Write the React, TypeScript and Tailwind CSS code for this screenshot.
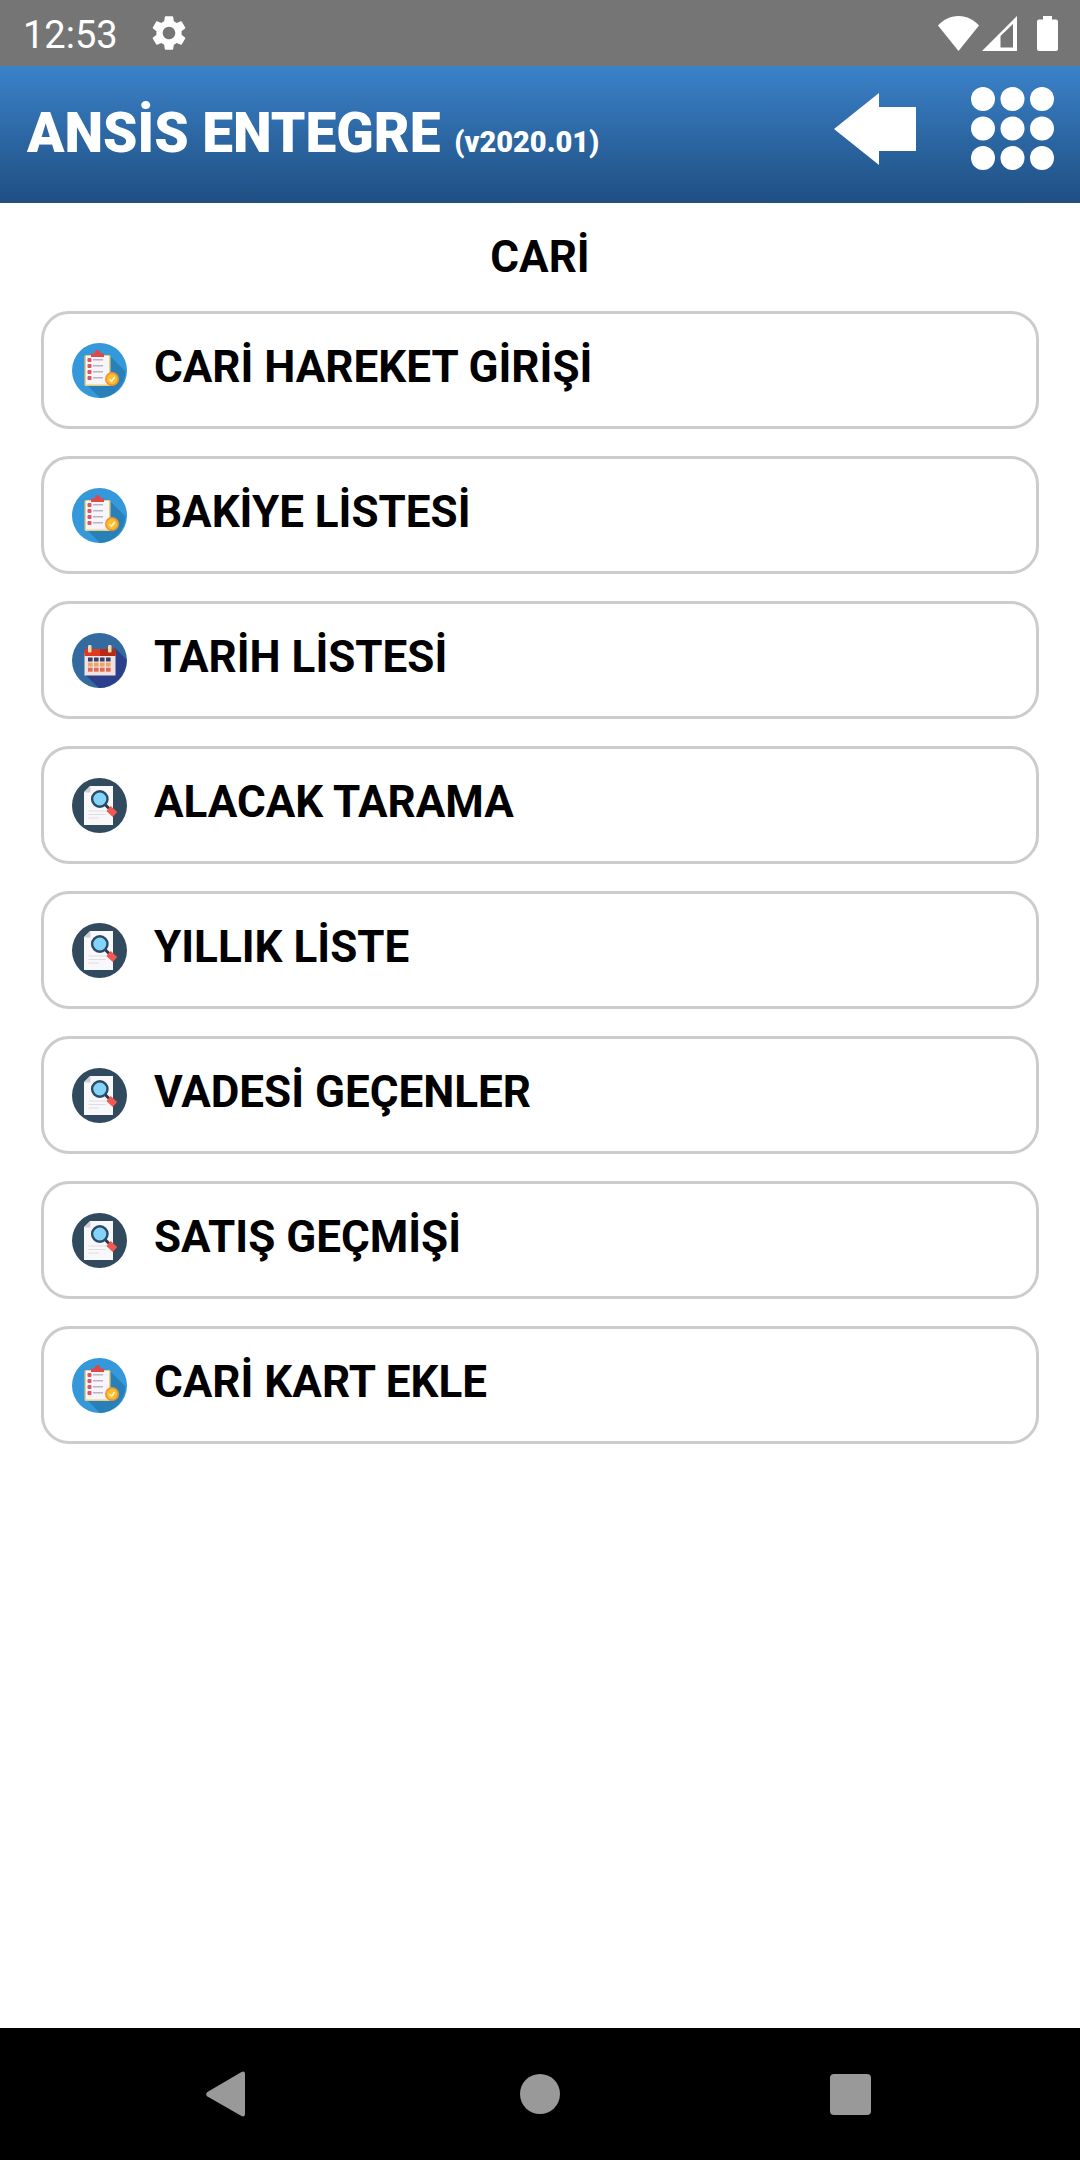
import { MdSettings } from 'react-icons/md'

type IconName = 'clipboard' | 'calendar' | 'search'

// Menu entries of the "Cari" module
const menuItems: { label: string; icon: IconName }[] = [
  { label: 'CARİ HAREKET GİRİŞİ', icon: 'clipboard' },
  { label: 'BAKİYE LİSTESİ', icon: 'clipboard' },
  { label: 'TARİH LİSTESİ', icon: 'calendar' },
  { label: 'ALACAK TARAMA', icon: 'search' },
  { label: 'YILLIK LİSTE', icon: 'search' },
  { label: 'VADESİ GEÇENLER', icon: 'search' },
  { label: 'SATIŞ GEÇMİŞİ', icon: 'search' },
  { label: 'CARİ KART EKLE', icon: 'clipboard' },
]

function ClipboardIcon() {
  return (
    <svg viewBox="0 0 55 55" className="size-[55px]" aria-hidden="true">
      <circle cx="27.5" cy="27.5" r="27.5" fill="#3498db" />
      <path d="M38 13 L53.5 28.5 A27.5 27.5 0 0 1 28 55 L15 42 Z" fill="#2980b9" />
      <rect x="12.5" y="12" width="26" height="31" rx="1.5" fill="#e8cf7c" />
      <rect x="14" y="13" width="23" height="28.5" fill="#f7f4fa" />
      <path d="M19 14 V10.5 H22.5 Q23 7 25.5 7 Q28 7 28.5 10.5 H32 V14 Z" fill="#e04848" />
      {[17, 23, 29, 35].map((y) => (
        <g key={y}>
          <rect x="15.5" y={y - 2} width="4" height="4" rx="1" fill="#dc5560" />
          <rect x="21" y={y - 1} width="10" height="1.5" fill="#b9b4c4" />
        </g>
      ))}
      <circle cx="40" cy="36" r="7" fill="#f2952e" />
      <circle cx="40" cy="36" r="5.2" fill="#fbc02f" />
      <path d="M37.5 36.3 L39.5 38.3 L42.8 34" fill="none" stroke="#fff3c4" strokeWidth="1.6" />
    </svg>
  )
}

function CalendarIcon() {
  return (
    <svg viewBox="0 0 55 55" className="size-[55px]" aria-hidden="true">
      <circle cx="27.5" cy="27.5" r="27.5" fill="#336a9f" />
      <path d="M43 15 L54.5 26.5 A27.5 27.5 0 0 1 27 55 L13 41.5 Z" fill="#2c3f8a" />
      <rect x="12.5" y="20" width="31" height="22.5" fill="#efe3e2" />
      <path d="M12.5 16 H43.5 V23 H12.5 Z" fill="#e0391f" />
      <path d="M28 16 H43.5 V23 H28 Z" fill="#b82a14" />
      <rect x="16" y="12" width="3.5" height="7.5" rx="1.2" fill="#f6d7a8" />
      <rect x="36" y="12" width="3.5" height="7.5" rx="1.2" fill="#f6d7a8" />
      {[16, 22, 28, 34].map((x) => (
        <g key={x}>
          <rect x={x} y="24.5" width="4.6" height="4" fill="#3b3f68" />
          <rect x={x} y="29.6" width="4.6" height="4" fill="#efa466" />
          <rect x={x} y="34.7" width="4.6" height="4" fill="#e46a52" />
        </g>
      ))}
    </svg>
  )
}

function SearchIcon() {
  return (
    <svg viewBox="0 0 55 55" className="size-[55px]" aria-hidden="true">
      <circle cx="27.5" cy="27.5" r="27.5" fill="#324a5e" />
      <path d="M18 8 H41 V47 H12 V14 Z" fill="#f8f8fb" />
      <path d="M18.5 8 V14.5 H12 Z" fill="#cfcdd8" />
      <path d="M16.5 33 H34 M16.5 36.5 H34 M16.5 40 H27" stroke="#dedbe4" strokeWidth="1.2" />
      <path d="M33 26.5 L37.5 31" stroke="#2b3a4c" strokeWidth="3" />
      <path d="M36.5 30.5 L43 36.5" stroke="#f1584f" strokeWidth="6.5" />
      <circle cx="27.8" cy="21" r="7.7" fill="#84d4fa" stroke="#2b4a63" strokeWidth="2.4" />
    </svg>
  )
}

function MenuIcon({ name }: { name: IconName }) {
  if (name === 'clipboard') return <ClipboardIcon />
  if (name === 'calendar') return <CalendarIcon />
  return <SearchIcon />
}

function StatusBar() {
  return (
    <div className="flex h-[66px] shrink-0 items-center bg-[#757575] pr-[22px] pl-[23px] text-white">
      <span className="pt-1 text-[38px] leading-[48px]">12:53</span>
      <MdSettings className="ml-[30px] size-[42px]" />
      <div className="ml-auto flex items-center">
        <svg viewBox="0 0 41 35" className="h-[35px] w-[41px]" fill="currentColor" aria-hidden="true">
          <path d="M20.5 35 L0 9.5 C5 4 12 0 20.5 0 C29 0 36 4 41 9.5 Z" />
        </svg>
        <svg viewBox="0 0 35 35" className="ml-[3px] h-[35px] w-[35px]" fill="currentColor" aria-hidden="true">
          <path fillRule="evenodd" d="M0 35 L35 0 V35 Z M18.5 20 V31.5 H31 V8 Z" />
        </svg>
        <svg viewBox="0 0 21 35" className="ml-5 h-[35px] w-[21px]" fill="currentColor" aria-hidden="true">
          <path d="M6 0 H15 V3.5 H19 Q21 3.5 21 5.5 V33 Q21 35 19 35 H2 Q0 35 0 33 V5.5 Q0 3.5 2 3.5 H6 Z" />
        </svg>
      </div>
    </div>
  )
}

function Header() {
  return (
    <header className="flex h-[137px] shrink-0 items-center bg-linear-to-b from-[#3b82c9] to-[#1f4f82] pr-[26px] pl-[27px] text-white">
      <h1 className="pt-1.5 text-[55px] leading-[68px] font-black">
        ANSİS ENTEGRE <span className="text-[29px]">(v2020.01)</span>
      </h1>
      <div className="mb-3 ml-auto flex items-center gap-[55px]">
        <button type="button" aria-label="Geri">
          <svg viewBox="0 0 82 72" className="h-[72px] w-[82px]" fill="currentColor">
            <path d="M0 36 L45 0 V14 H82 V58 H45 V72 Z" />
          </svg>
        </button>
        <button type="button" aria-label="Menü">
          <svg viewBox="0 0 83 83" className="size-[83px]" fill="currentColor">
            {[12, 41.5, 71].map((cy) =>
              [12, 41.5, 71].map((cx) => <circle key={`${cx}-${cy}`} cx={cx} cy={cy} r="12" />)
            )}
          </svg>
        </button>
      </div>
    </header>
  )
}

function NavigationBar() {
  return (
    <nav className="grid h-[132px] shrink-0 grid-cols-3 items-center justify-items-center bg-black px-[75px] text-[#999999]">
      <button type="button" aria-label="Back">
        <svg viewBox="0 0 48 48" className="size-12" fill="currentColor">
          <path d="M1 22.2 L35.5 2 Q39 0.5 39 4 V44 Q39 47.5 35.5 46 L1 26.2 Q-0.5 24.2 1 22.2 Z" />
        </svg>
      </button>
      <button type="button" aria-label="Home">
        <svg viewBox="0 0 40 40" className="size-10" fill="currentColor">
          <circle cx="20" cy="20" r="20" />
        </svg>
      </button>
      <button type="button" aria-label="Recent apps">
        <svg viewBox="0 0 41 41" className="size-[41px]" fill="currentColor">
          <rect width="41" height="41" rx="4" />
        </svg>
      </button>
    </nav>
  )
}

export default function App() {
  return (
    <div className="flex min-h-screen flex-col bg-white font-['Roboto',sans-serif] text-black">
      <StatusBar />
      <Header />
      <main className="flex-1 px-[41px] pt-7">
        <h2 className="text-center text-[44px] leading-[52px] font-bold">CARİ</h2>
        <ul className="mt-7 flex flex-col gap-[27px]">
          {menuItems.map((item) => (
            <li key={item.label}>
              <button
                type="button"
                className="flex h-[118px] w-full items-center gap-[27px] rounded-[28px] border-3 border-[#cccccc] px-7 text-left"
              >
                <MenuIcon name={item.icon} />
                <span className="pb-1.5 text-[44px] leading-[52px] font-bold">{item.label}</span>
              </button>
            </li>
          ))}
        </ul>
      </main>
      <NavigationBar />
    </div>
  )
}
